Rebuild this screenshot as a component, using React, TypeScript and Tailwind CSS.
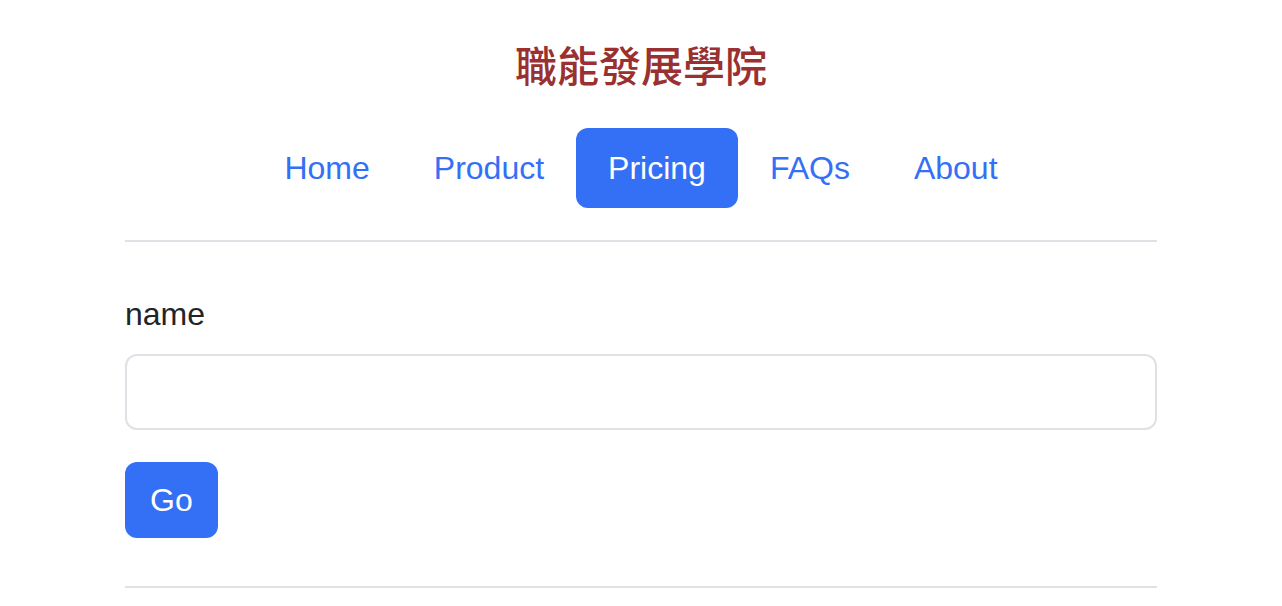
import {useState} from "react";

const links = ["Home", "Product", "Pricing", "FAQs", "About"]

export default function App() {
    const [active, setActive] = useState("Pricing")
    const [name, setName] = useState("")

    return (
        <div className="w-full bg-white font-['Liberation_Sans','Noto_Sans_CJK_TC',sans-serif] text-[#212529]">
            <div className="w-[1032px] mx-auto pt-[39px]">
                <h1 className="text-center text-[42px] leading-[50px] text-[#9a3030] font-['Noto_Sans_CJK_TC',sans-serif] font-medium">
                    職能發展學院
                </h1>
                <nav className="flex justify-center mt-[39px]">
                    {links.map(link =>
                        <NavLink key={link} label={link} active={link === active} onClick={() => setActive(link)} />
                    )}
                </nav>
                <hr className="mt-[32px] border-0 border-t-2 border-[#dee2e6]" />
                <form className="mt-[48px]" onSubmit={e => e.preventDefault()}>
                    <label className="block text-[32px] leading-[48px] mb-[16px]">name</label>
                    <input
                        value={name}
                        onChange={e => setName(e.target.value)}
                        className="block w-full h-[76px] px-[24px] text-[32px] border-2 border-[#dee2e6] rounded-[12px] outline-none"
                    />
                    <button className="mt-[32px] h-[76px] px-[25px] text-[32px] text-white bg-[#3470f6] rounded-[12px]">
                        Go
                    </button>
                </form>
                <hr className="mt-[48px] border-0 border-t-2 border-[#dee2e6]" />
            </div>
        </div>
    )
}

function NavLink(props: { label: string, active: boolean, onClick: () => void }) {
    return (
        <a
            href="#"
            onClick={e => { e.preventDefault(); props.onClick() }}
            className={props.active
                ? "px-[32px] py-[16px] text-[32px] leading-[48px] rounded-[12px] bg-[#3470f6] text-white"
                : "px-[32px] py-[16px] text-[32px] leading-[48px] rounded-[12px] text-[#3470f6]"}
        >
            {props.label}
        </a>
    )
}
